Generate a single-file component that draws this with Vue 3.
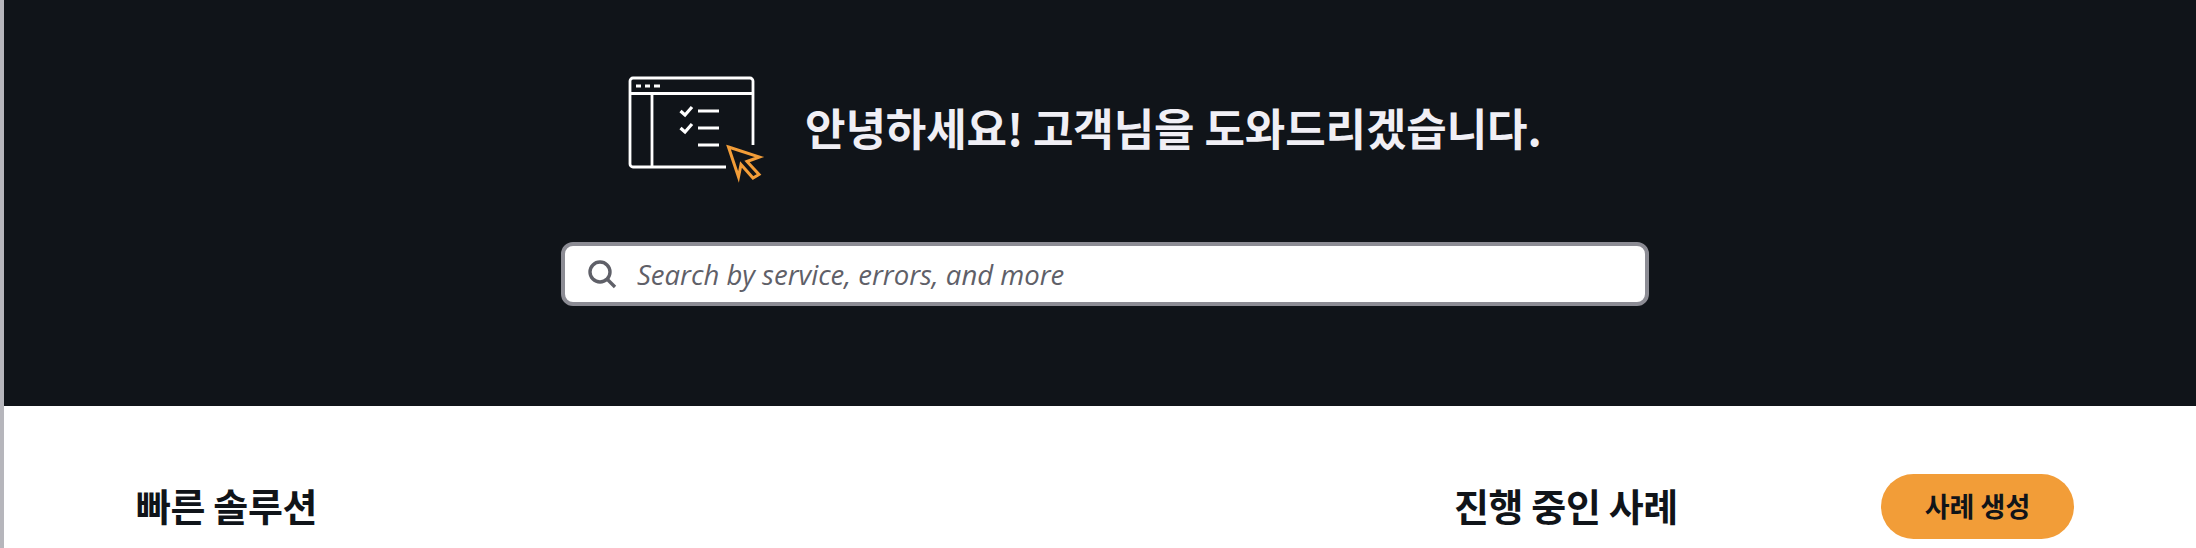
<template>
  <div class="page">
    <header class="hero">
      <div class="hero-inner">
        <div class="hero-title">
          <svg class="hero-icon" viewBox="28 15 138 108" width="138" height="108" fill="none" stroke-width="2.8">
            <g stroke="#fff">
              <path d="M153 85V21a3 3 0 0 0-3-3H33a3 3 0 0 0-3 3v83a3 3 0 0 0 3 3h93" />
              <path d="M30 33.5h123M52 33.5V107" />
              <path d="M36 26h5M45 26h5M54 26h6" />
              <path stroke-width="3.2" d="M80.5 51l4.5 4 7-8M80.5 68l4.5 4 7-8" />
              <path d="M98 51h21M98 68h21M98 85h21" />
            </g>
            <path stroke="#f29d38" stroke-width="3" d="M128.5 87l31 10-12.5 4.5 12 13-6 3.5-12-13.5-2.5 12.5z" />
          </svg>
          <h1>안녕하세요! 고객님을 도와드리겠습니다.</h1>
        </div>
        <label class="search">
          <svg viewBox="0 0 30 30" width="30" height="30" fill="none" stroke="#5f6068" stroke-width="3.4">
            <circle cx="13" cy="13" r="10" />
            <path d="M20 20l8 8" />
          </svg>
          <input type="text" placeholder="Search by service, errors, and more" />
        </label>
      </div>
    </header>

    <main class="columns">
      <h2 class="col-left">빠른 솔루션</h2>
      <div class="col-right">
        <h2>진행 중인 사례</h2>
        <button type="button">사례 생성</button>
      </div>
    </main>
  </div>
</template>

<script setup>
</script>

<style>
html,
body {
  margin: 0;
  height: 548px;
  overflow: hidden;
  background: #fff;
}
</style>

<style scoped>
.page {
  border-left: 4px solid #b6b6bc;
  height: 548px;
  box-sizing: border-box;
  font-family: "Noto Sans CJK KR", "Noto Sans", sans-serif;
  color: #101419;
}

.hero {
  background: #101419;
  height: 406px;
  box-sizing: border-box;
  padding: 75px 0 0 557px;
}

.hero-inner {
  width: 1088px;
}

.hero-title {
  display: flex;
  align-items: center;
  gap: 39px;
  padding-left: 67px;
  height: 108px;
}

.hero-title h1 {
  margin: 0 0 4px;
  color: #f0eff5;
  font-size: 44px;
  font-weight: 700;
  letter-spacing: -0.1px;
  white-space: nowrap;
}

.search {
  display: flex;
  align-items: center;
  gap: 20px;
  margin-top: 59px;
  height: 64px;
  box-sizing: border-box;
  padding-left: 22px;
  background: #fff;
  border: 4px solid #8c8c94;
  border-radius: 12px;
}

.search svg {
  flex: none;
}

.search input {
  flex: 1;
  border: 0;
  outline: 0;
  padding: 0;
  background: transparent;
  font-family: "Open Sans", sans-serif;
  font-style: italic;
  font-size: 27.5px;
}

.search input::placeholder {
  color: #5f6068;
  opacity: 1;
}

.columns {
  display: flex;
  align-items: center;
  padding: 68px 0 0 132px;
}

.columns h2 {
  margin: 0 0 5px;
  font-size: 38px;
  font-weight: 700;
  letter-spacing: -0.4px;
  white-space: nowrap;
}

.col-left {
  width: 1318px;
}

.col-right {
  display: flex;
  align-items: center;
  width: 620px;
  justify-content: space-between;
}

.col-right button {
  width: 193px;
  height: 65px;
  padding: 0 0 3px;
  border: 0;
  border-radius: 33px;
  background: #f29d38;
  color: #101419;
  font-family: inherit;
  font-size: 27px;
  font-weight: 700;
}
</style>
